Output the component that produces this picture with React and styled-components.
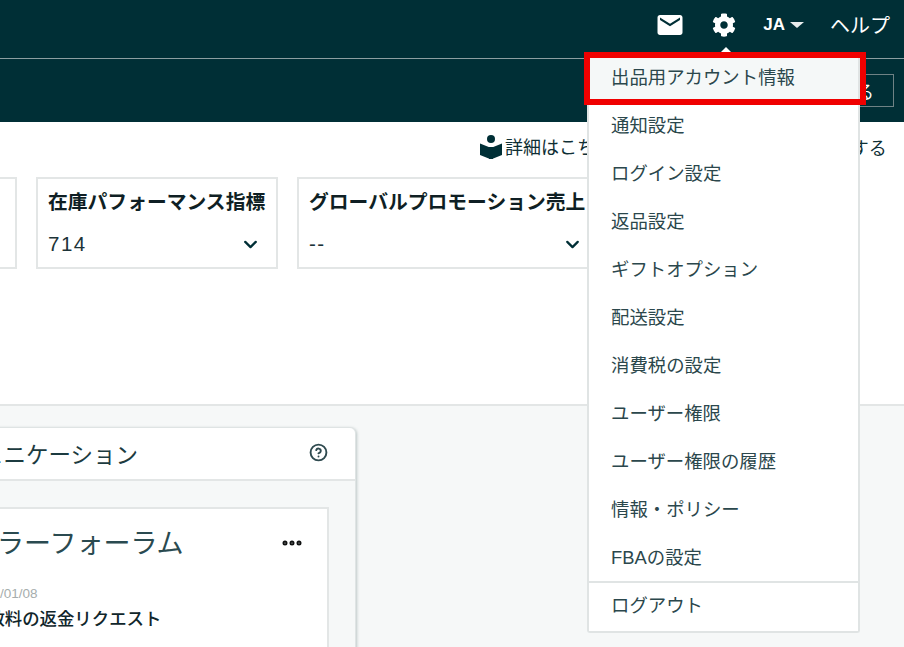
import React from 'react';
import styled, { createGlobalStyle } from 'styled-components';
import { MdEmail } from 'react-icons/md';
import { FaCog } from 'react-icons/fa';
import { ChevronDown, CircleHelp, Ellipsis } from 'lucide-react';

const MENU_ITEMS = [
  '出品用アカウント情報',
  '通知設定',
  'ログイン設定',
  '返品設定',
  'ギフトオプション',
  '配送設定',
  '消費税の設定',
  'ユーザー権限',
  'ユーザー権限の履歴',
  '情報・ポリシー',
  'FBAの設定',
];

const METRICS = [
  { title: '', value: '', width: 242 },
  { title: '在庫パフォーマンス指標', value: '714', width: 242 },
  { title: 'グローバルプロモーション売上', value: '--', width: 303 },
];

function ReaderIcon() {
  return (
    <svg width="24" height="26" viewBox="0 0 24 26" fill="#002f36">
      <circle cx="12" cy="5" r="4" />
      <path d="M1 9.5 L11 13.5 V25 L1 21 Z" />
      <path d="M23 9.5 L13 13.5 V25 L23 21 Z" />
      <rect x="10" y="13" width="4" height="12" />
    </svg>
  );
}

export default function App() {
  return (
    <Page>
      <GlobalStyle />
      <TopBar>
        <MailIcon />
        <GearIcon />
        <Lang>
          JA
          <Caret />
        </Lang>
        <Help>ヘルプ</Help>
      </TopBar>
      <SubBar>
        <OutlineButton>する</OutlineButton>
      </SubBar>
      <Summary>
        <LinkRow>
          <ReaderIcon />
          <LinkText>詳細はこちら</LinkText>
          <Feedback>フィードバックする</Feedback>
        </LinkRow>
        <Cards>
          {METRICS.map((m) => (
            <Card key={m.title} $width={m.width}>
              <CardTitle>{m.title}</CardTitle>
              <CardValue>
                {m.value}
                <ChevronDown size={21} strokeWidth={2.6} color="#002f36" />
              </CardValue>
            </Card>
          ))}
        </Cards>
      </Summary>
      <Lower>
        <Panel>
          <PanelHeader>
            <PanelTitle>コミュニケーション</PanelTitle>
            <CircleHelp size={19} strokeWidth={2.4} color="#2f4a4f" />
          </PanelHeader>
          <PanelBody>
            <ForumCard>
              <ForumHead>
                <ForumTitle>セラーフォーラム</ForumTitle>
                <MoreIcon />
              </ForumHead>
              <ForumDate>2024/01/08</ForumDate>
              <ForumPost>手数料の返金リクエスト</ForumPost>
            </ForumCard>
          </PanelBody>
        </Panel>
      </Lower>
      <Dropdown>
        <Arrow />
        {MENU_ITEMS.map((item, i) => (
          <MenuItem key={item} $active={i === 0}>
            {item}
          </MenuItem>
        ))}
        <MenuItem $divider>ログアウト</MenuItem>
        <Highlight />
      </Dropdown>
    </Page>
  );
}

const GlobalStyle = createGlobalStyle`
  html, body {
    margin: 0;
    padding: 0;
    background: #f6f8f8;
  }
`;

const Page = styled.div`
  position: relative;
  width: 904px;
  height: 647px;
  overflow: hidden;
  background: #f6f8f8;
  color: #0f2f35;
  font-family: "Liberation Sans", "Noto Sans CJK JP", sans-serif;
`;

const TopBar = styled.div`
  box-sizing: border-box;
  display: flex;
  align-items: center;
  justify-content: flex-end;
  height: 59px;
  padding: 0 14px 9px 0;
  background: #002f36;
  border-bottom: 1px solid #8c9ea1;
  color: #fff;
`;

const MailIcon = styled(MdEmail)`
  width: 30px;
  height: 30px;
  margin-right: 27px;
`;

const GearIcon = styled(FaCog)`
  width: 24px;
  height: 24px;
  margin-right: 27px;
`;

const Lang = styled.div`
  display: flex;
  align-items: center;
  gap: 5px;
  margin-right: 26px;
  font-size: 17px;
  font-weight: 700;
`;

const Caret = styled.span`
  width: 0;
  height: 0;
  border-left: 7px solid transparent;
  border-right: 7px solid transparent;
  border-top: 6px solid #e8eded;
`;

const Help = styled.div`
  font-size: 20px;
`;

const SubBar = styled.div`
  box-sizing: border-box;
  display: flex;
  justify-content: flex-end;
  align-items: center;
  height: 63px;
  padding: 0 10px 0 0;
  background: #002f36;
`;

const OutlineButton = styled.div`
  box-sizing: border-box;
  display: flex;
  align-items: center;
  justify-content: flex-end;
  width: 100px;
  height: 33px;
  padding-right: 19px;
  border: 1px solid #6f8285;
  color: #fff;
  font-size: 18px;
`;

const Summary = styled.div`
  box-sizing: border-box;
  height: 284px;
  background: #fff;
  border-bottom: 2px solid #e3e6e6;
`;

const LinkRow = styled.div`
  display: flex;
  align-items: center;
  height: 50px;
  padding: 0 0 5px 479px;
  font-size: 18px;
  color: #0f2f35;
`;

const LinkText = styled.span`
  margin-left: 2px;
  position: relative;
  top: -1px;
`;

const Feedback = styled.span`
  margin-left: 112px;
  white-space: nowrap;
`;

const Cards = styled.div`
  display: flex;
  gap: 19px;
  margin-left: -225px;
`;

const Card = styled.div`
  box-sizing: border-box;
  flex: none;
  width: ${(props) => props.$width}px;
  height: 92px;
  padding: 10px 15px 0 10px;
  background: #fff;
  border: 2px solid #e3e6e6;
`;

const CardTitle = styled.div`
  height: 26px;
  font-size: 19.8px;
  line-height: 26px;
  font-weight: 700;
  color: #0f1f24;
  white-space: nowrap;
`;

const CardValue = styled.div`
  display: flex;
  align-items: center;
  justify-content: space-between;
  height: 28px;
  margin-top: 15px;
  font-size: 20.5px;
  letter-spacing: 1.5px;
  color: #1d3338;
`;

const Lower = styled.div`
  padding-top: 21px;
`;

const Panel = styled.div`
  box-sizing: border-box;
  width: 441px;
  height: 240px;
  margin-left: -85px;
  background: #f6f8f8;
  border: 1px solid #dfe4e4;
  border-radius: 6px 6px 0 0;
  box-shadow: 1px 1px 3px rgba(120, 140, 140, 0.45);
`;

const PanelHeader = styled.div`
  box-sizing: border-box;
  display: flex;
  align-items: center;
  justify-content: space-between;
  height: 53px;
  padding: 0 27px 2px 20px;
  background: #fff;
  border-bottom: 2px solid #e3e6e6;
  border-radius: 6px 6px 0 0;
`;

const PanelTitle = styled.div`
  font-size: 22.5px;
  color: #1c3b40;
`;

const PanelBody = styled.div`
  padding: 26px 26px 0 27px;
`;

const ForumCard = styled.div`
  box-sizing: border-box;
  height: 160px;
  padding: 10px 23px 0 25px;
  background: #fff;
  border: 2px solid #e3e6e6;
`;

const ForumHead = styled.div`
  display: flex;
  align-items: center;
  justify-content: space-between;
  height: 44px;
`;

const MoreIcon = styled(Ellipsis).attrs({ size: 24, strokeWidth: 3, color: '#0f1111' })`
  position: relative;
  top: 2px;
`;

const ForumTitle = styled.div`
  font-size: 27px;
  color: #2a4a50;
`;

const ForumDate = styled.div`
  margin-top: 22px;
  font-size: 13.5px;
  line-height: 18px;
  color: #a6adad;
`;

const ForumPost = styled.div`
  margin-top: 4px;
  font-size: 17.4px;
  line-height: 24px;
  font-weight: 500;
  color: #10262b;
`;

const Dropdown = styled.div`
  position: absolute;
  top: 54px;
  left: 587px;
  box-sizing: border-box;
  width: 273px;
  background: #fff;
  border: 2px solid #e0e4e4;
  border-top: none;
  border-radius: 0 0 3px 3px;
`;

const Arrow = styled.span`
  position: absolute;
  top: -7px;
  left: 130px;
  width: 0;
  height: 0;
  border-left: 7px solid transparent;
  border-right: 7px solid transparent;
  border-bottom: 7px solid #fff;
`;

const MenuItem = styled.div`
  box-sizing: border-box;
  height: ${(props) => (props.$divider ? 50 : 48)}px;
  margin-top: ${(props) => (props.$divider ? -1 : 0)}px;
  padding-left: 22px;
  line-height: ${(props) => (props.$divider ? 45 : 48)}px;
  font-size: 18.4px;
  color: #2b474c;
  background: ${(props) => (props.$active ? '#f5f8f8' : '#fff')};
  border-top: ${(props) => (props.$divider ? '2px solid #e0e4e4' : 'none')};
`;

const Highlight = styled.div`
  position: absolute;
  top: -2px;
  left: -5px;
  box-sizing: border-box;
  width: 282px;
  height: 53px;
  border: 6px solid #f00000;
`;
